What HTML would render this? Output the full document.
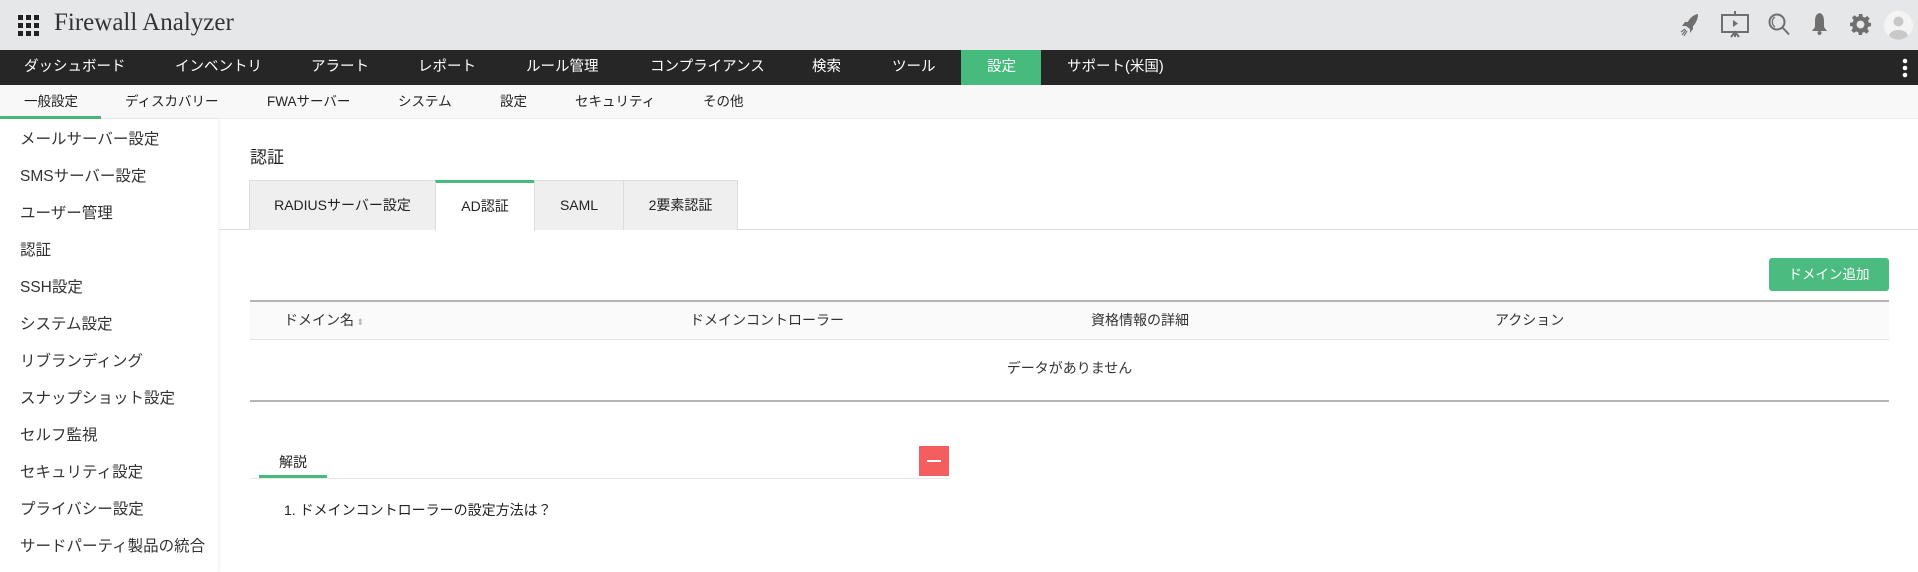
<!DOCTYPE html>
<html><head><meta charset="utf-8"><style>
*{margin:0;padding:0;box-sizing:border-box}
body{width:1918px;height:572px;overflow:hidden;background:#fff;font-family:"Liberation Sans","Noto Sans CJK JP",sans-serif;color:#333;position:relative}
.abs{position:absolute;white-space:nowrap}
#hdr{position:absolute;left:0;top:0;width:1918px;height:50px;background:#e6e7e9}
#nav{position:absolute;left:0;top:50px;width:1918px;height:35px;background:#262626}
#nav span{position:absolute;top:0;line-height:35px;color:#fff;font-size:14.5px}
#sub{position:absolute;left:0;top:85px;width:1918px;height:34px;background:#f8f8f8;border-bottom:1px solid #eee}
#sub span{position:absolute;top:0;line-height:34px;color:#222;font-size:13.5px}
#side{position:absolute;left:0;top:119px;width:218px;height:453px;background:#fff;box-shadow:1px 0 3px rgba(0,0,0,.08)}
#side div{position:absolute;left:20px;font-size:15.5px;color:#333}
.tab{position:absolute;top:180px;height:50px;background:#efefef;border:1px solid #ddd;border-bottom:none;font-size:14px;line-height:48px;text-align:center;color:#222}
.th{position:absolute;top:300px;font-size:14px;line-height:40px;color:#333}
</style></head><body>
<div id="hdr">
 <svg class="abs" style="left:18px;top:15px" width="21" height="21" viewBox="0 0 21 21" fill="#222">
  <rect x="0" y="0" width="5" height="5"/><rect x="8" y="0" width="5" height="5"/><rect x="16" y="0" width="5" height="5"/>
  <rect x="0" y="8" width="5" height="5"/><rect x="8" y="8" width="5" height="5"/><rect x="16" y="8" width="5" height="5"/>
  <rect x="0" y="16" width="5" height="5"/><rect x="8" y="16" width="5" height="5"/><rect x="16" y="16" width="5" height="5"/>
 </svg>
 <div class="abs" style="left:54px;top:9px;font-family:'Liberation Serif',serif;font-size:25px;color:#333">Firewall Analyzer</div>
 <svg class="abs" style="left:1680px;top:13px" width="20" height="24" viewBox="0 0 20 24" fill="#6f6f6f"><path d="M18 1 C12 2 8 7 6 13 L10 16 C15 12 18 7 18 1Z"/><path d="M6 13 L2 13 L5 9 L9 9Z M10 16 L10 20 L13 16 L13 12Z"/><path d="M2 22 L6 17 M4 23 L7 18 M1 19 L5 16" stroke="#6f6f6f" stroke-width="1.2"/></svg>
 <svg class="abs" style="left:1721px;top:11px" width="28" height="27" viewBox="0 0 28 27" fill="none" stroke="#6f6f6f" stroke-width="2"><rect x="1" y="4" width="26" height="17"/><path d="M14 0v4 M14 21v5 M10 26l4-5 4 5"/><path d="M12 9l5 3.5-5 3.5z" fill="#6f6f6f" stroke="none"/></svg>
 <svg class="abs" style="left:1768px;top:13px" width="22" height="23" viewBox="0 0 22 23" fill="none" stroke="#6f6f6f" stroke-width="2"><circle cx="9" cy="9" r="7.5"/><path d="M14.5 14.5L21 21.5"/><path d="M7 4 A6 6 0 0 0 7 14" stroke-width="1.3"/></svg>
 <svg class="abs" style="left:1811px;top:13px" width="17" height="22" viewBox="0 0 17 22" fill="#6f6f6f"><path d="M8.5 0 C5 1 4 4 4 8 L4 14 L1 18 L16 18 L13 14 L13 8 C13 4 12 1 8.5 0Z"/><circle cx="8.5" cy="20" r="2"/></svg>
 <svg class="abs" style="left:1850px;top:14px" width="21" height="21" viewBox="0 0 24 24" fill="#6f6f6f"><path d="M10 0h4l.6 3.2 2.4 1 2.7-1.9 2.8 2.8-1.9 2.7 1 2.4L24 10v4l-3.2.6-1 2.4 1.9 2.7-2.8 2.8-2.7-1.9-2.4 1L14 24h-4l-.6-3.2-2.4-1-2.7 1.9-2.8-2.8 1.9-2.700-1-2.4L0 14v-4l3.2-.6 1-2.4-1.9-2.7 2.8-2.8 2.7 1.9 2.4-1zM12 7.5a4.5 4.5 0 1 0 0 9 4.5 4.5 0 1 0 0-9z"/></svg>
 <svg class="abs" style="left:1884px;top:11px" width="29" height="29" viewBox="0 0 29 29"><circle cx="14.5" cy="14.5" r="14.5" fill="#f4f4f4"/><circle cx="14.5" cy="10.5" r="5" fill="#c8c8c8"/><path d="M5 25 C6 17 23 17 24 25 A14 14 0 0 1 5 25Z" fill="#c8c8c8"/></svg>
</div>
<div id="nav">
 <span style="left:24px">ダッシュボード</span>
 <span style="left:175px">インベントリ</span>
 <span style="left:311px">アラート</span>
 <span style="left:418px">レポート</span>
 <span style="left:526px">ルール管理</span>
 <span style="left:650px">コンプライアンス</span>
 <span style="left:812px">検索</span>
 <span style="left:892px">ツール</span>
 <div class="abs" style="left:961px;top:0;width:80px;height:35px;background:#47bb7d"></div>
 <span style="left:987px">設定</span>
 <span style="left:1067px">サポート(米国)</span>
 <svg class="abs" style="left:1902px;top:8px" width="6" height="20" viewBox="0 0 6 20" fill="#fff"><circle cx="3" cy="3" r="2.3"/><circle cx="3" cy="10" r="2.3"/><circle cx="3" cy="17" r="2.3"/></svg>
</div>
<div id="sub">
 <span style="left:24px">一般設定</span>
 <div class="abs" style="left:0;top:31px;width:101px;height:3px;background:#47bb7d"></div>
 <span style="left:125px">ディスカバリー</span>
 <span style="left:267px">FWAサーバー</span>
 <span style="left:398px">システム</span>
 <span style="left:500px">設定</span>
 <span style="left:575px">セキュリティ</span>
 <span style="left:703px">その他</span>
</div>
<div id="side">
 <div style="top:8px">メールサーバー設定</div>
 <div style="top:45px">SMSサーバー設定</div>
 <div style="top:82px">ユーザー管理</div>
 <div style="top:119px">認証</div>
 <div style="top:156px">SSH設定</div>
 <div style="top:193px">システム設定</div>
 <div style="top:230px">リブランディング</div>
 <div style="top:267px">スナップショット設定</div>
 <div style="top:304px">セルフ監視</div>
 <div style="top:341px">セキュリティ設定</div>
 <div style="top:378px">プライバシー設定</div>
 <div style="top:415px">サードパーティ製品の統合</div>
</div>
<div class="abs" style="left:250px;top:143px;font-size:17px;color:#222">認証</div>
<div class="abs" style="left:219px;top:229px;width:1699px;height:1px;background:#ddd"></div>
<div class="tab" style="left:249px;width:187px">RADIUSサーバー設定</div>
<div class="tab" style="left:435px;width:100px;background:#fff;border-top:3px solid #47bb7d;height:51px;line-height:46px">AD認証</div>
<div class="tab" style="left:534px;width:90px">SAML</div>
<div class="tab" style="left:623px;width:115px">2要素認証</div>
<div class="abs" style="left:1769px;top:258px;width:120px;height:33px;background:#4cbb7f;border-radius:3px;color:#fff;font-size:13.5px;line-height:33px;text-align:center">ドメイン追加</div>
<div class="abs" style="left:250px;top:300px;width:1639px;height:40px;background:#fafafa;border-top:2px solid #b5b5b5;border-bottom:1px solid #e3e3e3"></div>
<div class="th" style="left:284px">ドメイン名<span style="color:#bbb;font-size:9px"> ⬍</span></div>
<div class="th" style="left:690px">ドメインコントローラー</div>
<div class="th" style="left:1091px">資格情報の詳細</div>
<div class="th" style="left:1495px">アクション</div>
<div class="abs" style="left:250px;top:358px;width:1639px;text-align:center;font-size:14px">データがありません</div>
<div class="abs" style="left:250px;top:400px;width:1639px;height:2px;background:#b5b5b5"></div>
<div class="abs" style="left:279px;top:452px;font-size:14px;color:#222">解説</div>
<div class="abs" style="left:259px;top:475px;width:68px;height:3px;background:#47bb7d"></div>
<div class="abs" style="left:250px;top:478px;width:699px;height:1px;background:#e8e8e8"></div>
<div class="abs" style="left:919px;top:446px;width:30px;height:30px;background:#f55e5e"><div style="position:absolute;left:8px;top:14px;width:14px;height:2px;background:#fff"></div></div>
<div class="abs" style="left:284px;top:500px;font-size:14px;color:#222">1. ドメインコントローラーの設定方法は？</div>
</body></html>
